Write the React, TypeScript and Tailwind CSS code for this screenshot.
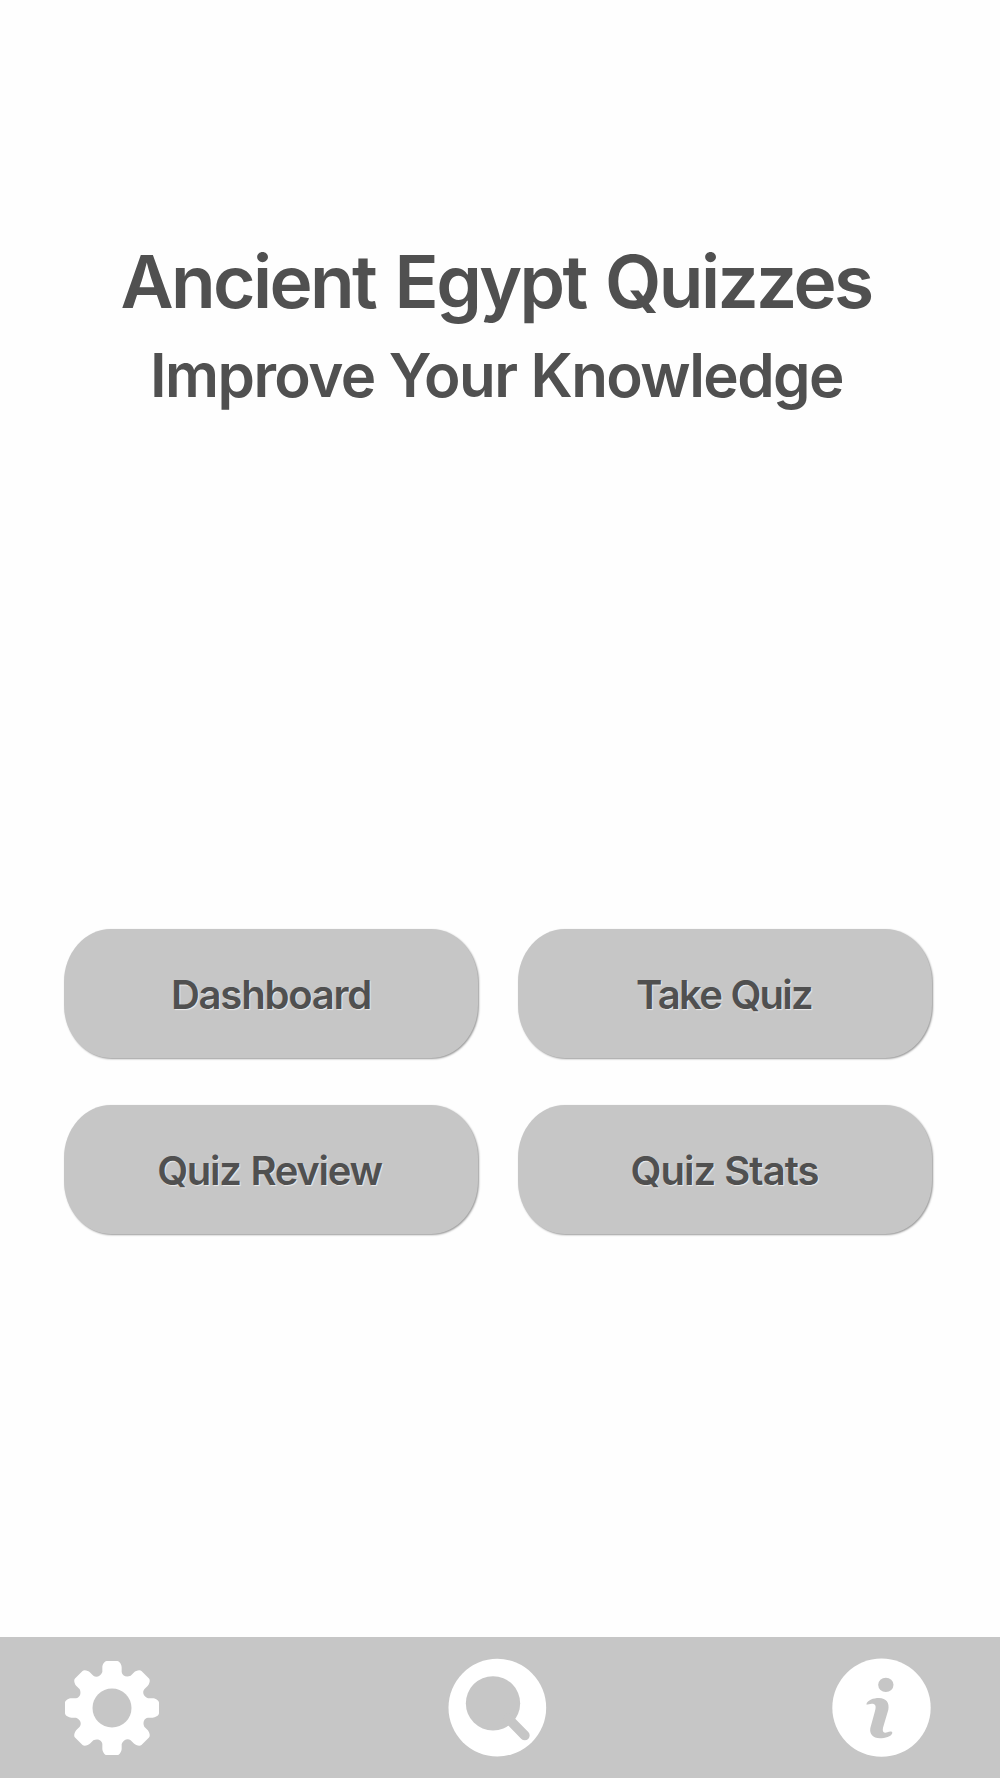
const actions = [
  { label: "Dashboard", text: "tracking-[-1.2px]" },
  { label: "Take Quiz", text: "tracking-[-1.75px] [word-spacing:1px] pr-[2px]" },
  { label: "Quiz Review", text: "tracking-[-1.28px] [word-spacing:1px] pr-[3px]" },
  { label: "Quiz Stats", text: "tracking-[-0.96px] pr-[1px]" },
];

// Outline of the gear: one tooth repeated every 45 degrees around the origin.
function gearOutline() {
  const parts: string[] = [];
  for (let i = 0; i < 8; i++) {
    const a = (i * Math.PI) / 4;
    const p = (x: number, y: number) =>
      `${(x * Math.cos(a) - y * Math.sin(a)).toFixed(1)} ${(x * Math.sin(a) + y * Math.cos(a)).toFixed(1)}`;
    parts.push(
      `${i === 0 ? "M" : "L"}${p(-29, -108)}`,
      `L${p(-29, -122)}`,
      `C${p(-29, -129)} ${p(-23, -141)} ${p(-16, -141)}`,
      `L${p(16, -141)}`,
      `C${p(23, -141)} ${p(29, -129)} ${p(29, -122)}`,
      `L${p(29, -108)}`,
      `C${p(30, -97)} ${p(43, -91)} ${p(55.9, -96.9)}`
    );
  }
  return parts.join(" ") + "Z";
}

function GearIcon() {
  return (
    <svg viewBox="-144 -150 300 300" className="size-[100px]">
      <path d={gearOutline()} fill="#fff" />
      <circle r="58.5" fill="#c6c6c6" />
    </svg>
  );
}

function SearchIcon() {
  return (
    <svg viewBox="54 98 300 300" className="size-[100px]">
      <circle cx="202" cy="247" r="146.5" fill="#fff" />
      <circle cx="189" cy="234" r="81.5" fill="#c6c6c6" />
      <path d="M235 280L284.5 330.5" stroke="#c6c6c6" strokeWidth="29" strokeLinecap="round" />
    </svg>
  );
}

function InfoIcon() {
  return (
    <svg viewBox="66 98 300 300" className="size-[100px]">
      <circle cx="214.5" cy="247" r="147.5" fill="#fff" />
      <g fill="#c6c6c6">
        <ellipse cx="227.5" cy="178.5" rx="23" ry="21.5" />
        <path d="M169 237C172 224 191 218 207 218C229 219 239 232 235 253L219 307C216 319 222 325 232 321C238 318 247 317 247 323C244 334 225 339 210 339C188 338 178 326 181 308L195 257C199 242 197 235 185 235C178 235 171 239 169 237Z" />
      </g>
    </svg>
  );
}

export default function App() {
  return (
    <div className="flex h-[1778px] w-[1000px] flex-col overflow-hidden bg-[#fefefe] font-['Inter',sans-serif] font-semibold text-[#505050]">
      <header className="flex h-[929px] flex-col items-center pt-[242px]">
        <h1 className="pr-[8px] text-[73px] leading-[80px] tracking-[-2.6px] whitespace-nowrap [word-spacing:3.5px]">
          Ancient Egypt Quizzes
        </h1>
        <h2 className="mt-[17px] pr-[7px] text-[60px] leading-[72px] tracking-[-1.56px] whitespace-nowrap [word-spacing:0.5px]">
          Improve Your Knowledge
        </h2>
      </header>
      <main className="grid flex-1 grid-cols-[414px_414px] content-start gap-x-[40px] gap-y-[46.500px] pl-[64px]">
        {actions.map((a) => (
          <button
            key={a.label}
            className="flex h-[129px] items-center justify-center rounded-[47px/53px] bg-[#c6c6c6] pt-[3px] text-[40px] leading-[48px] shadow-[1px_1px_2px_rgba(0,0,0,0.4)] [text-shadow:1px_1px_1px_rgba(255,255,255,0.65)]"
          >
            <span className={a.text}>{a.label}</span>
          </button>
        ))}
      </main>
      <footer className="flex h-[141px] items-start justify-between bg-[#c6c6c6] pt-[21px] pr-[68px] pl-[64px]">
        <button aria-label="Settings"><GearIcon /></button>
        <button aria-label="Search"><SearchIcon /></button>
        <button aria-label="Information"><InfoIcon /></button>
      </footer>
    </div>
  );
}
